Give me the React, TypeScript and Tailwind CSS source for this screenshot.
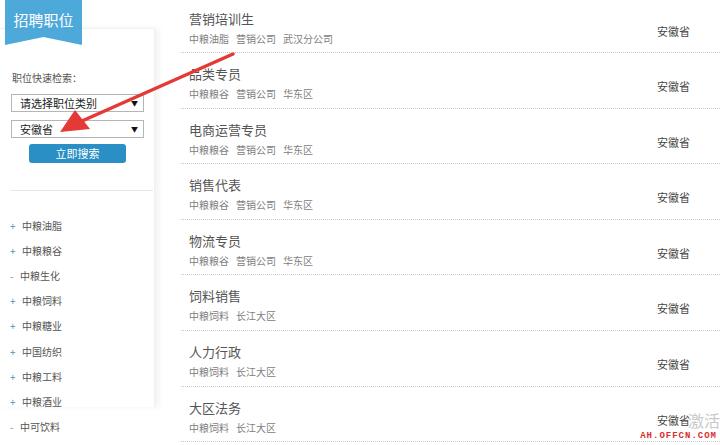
import React from 'react';

const jobs = [
  { title: '营销培训生', tags: ['中粮油脂', '营销公司', '武汉分公司'] },
  { title: '品类专员', tags: ['中粮粮谷', '营销公司', '华东区'] },
  { title: '电商运营专员', tags: ['中粮粮谷', '营销公司', '华东区'] },
  { title: '销售代表', tags: ['中粮粮谷', '营销公司', '华东区'] },
  { title: '物流专员', tags: ['中粮粮谷', '营销公司', '华东区'] },
  { title: '饲料销售', tags: ['中粮饲料', '长江大区'] },
  { title: '人力行政', tags: ['中粮饲料', '长江大区'] },
  { title: '大区法务', tags: ['中粮饲料', '长江大区'] },
];

const companies = [
  { name: '中粮油脂', open: false },
  { name: '中粮粮谷', open: false },
  { name: '中粮生化', open: true },
  { name: '中粮饲料', open: false },
  { name: '中粮糖业', open: false },
  { name: '中国纺织', open: false },
  { name: '中粮工料', open: false },
  { name: '中粮酒业', open: false },
  { name: '中可饮料', open: true },
];

function Select({ label }: { label: string }) {
  return (
    <div className="flex h-[18px] w-[133px] items-center justify-between border border-[#b5b5b5] bg-white pl-[8px] pr-[5px] text-[11px] leading-none text-[#222]">
      <span>{label}</span>
      <span className="text-[7px] text-[#111]">▼</span>
    </div>
  );
}

export default function App() {
  return (
    <div
      className="relative flex h-[445px] w-[720px] overflow-hidden bg-white"
      style={{ fontFamily: '"Noto Sans CJK SC", "Noto Sans", sans-serif' }}
    >
      {/* sidebar */}
      <div className="w-[181px] shrink-0">
        <div className="relative z-10 ml-[5px] flex h-[45px] w-[77px] items-start justify-center bg-[#4ea9db] pt-[10px] text-[15px] leading-[20px] text-white [clip-path:polygon(0_0,100%_0,100%_100%,50%_82%,0_100%)]">
          招聘职位
        </div>
        <div className="-mt-[17px] h-[379px] w-[155px] border-t border-r border-[#f0f0f0] bg-white shadow-[4px_0_6px_rgba(0,0,0,0.05)]">
          <div className="pl-[12px] pt-[42px] text-[10px] leading-[14px] text-[#555]">职位快速检索：</div>
          <div className="ml-[11px] mt-[9px]">
            <Select label="请选择职位类别" />
          </div>
          <div className="ml-[11px] mt-[8px]">
            <Select label="安徽省" />
          </div>
          <div className="ml-[29px] mt-[6px] flex h-[19px] w-[97px] items-center justify-center rounded-[3px] bg-[#2a8fc5] text-[11px] text-white">
            立即搜索
          </div>
          <div className="ml-[10px] mt-[27px] h-px w-[143px] bg-[#e8e8e8]" />
          <ul className="mt-[22px]">
            {companies.map((c) => (
              <li key={c.name} className="flex h-[25.1px] items-center text-[10px] text-[#555]">
                {c.open ? (
                  <span className="ml-[10px] w-[10px] text-[#888]">-</span>
                ) : (
                  <span className="ml-[10px] w-[12px] text-[#5a8fa8]">+</span>
                )}
                <span>{c.name}</span>
              </li>
            ))}
          </ul>
        </div>
      </div>

      {/* job list */}
      <div className="-mt-[2.5px] flex-1">
        {jobs.map((j) => (
          <div
            key={j.title}
            className="flex h-[55.6px] justify-between border-b border-dotted border-[#c8c8c8] pl-[8px] pr-[30px]"
          >
            <div>
              <div className="pt-[12px] text-[13px] leading-[17px] text-[#555]">{j.title}</div>
              <div className="mt-[5px] flex gap-[7px] text-[10px] leading-[13px] text-[#808080]">
                {j.tags.map((t) => (
                  <span key={t}>{t}</span>
                ))}
              </div>
            </div>
            <div className="pt-[27px] text-[11px] leading-[13px] text-[#444]">安徽省</div>
          </div>
        ))}
      </div>

      {/* annotation arrow */}
      <svg className="pointer-events-none absolute left-0 top-0" width="720" height="445">
        <line x1="233" y1="54" x2="82" y2="121" stroke="#e53935" strokeWidth="3.5" strokeLinecap="round" />
        <polygon points="60,132 75,110 90,129" fill="#e53935" />
      </svg>

      {/* watermark */}
      <div className="absolute right-0 top-[410px] text-[16px] leading-[20px] text-[#c8c8c8]">激活</div>
      <div
        className="absolute right-[3px] top-[431px] text-[9px] font-bold leading-[10px] tracking-[1px] text-[#d9302c]"
        style={{ fontFamily: '"Liberation Mono", monospace' }}
      >
        AH.OFFCN.COM
      </div>
    </div>
  );
}
